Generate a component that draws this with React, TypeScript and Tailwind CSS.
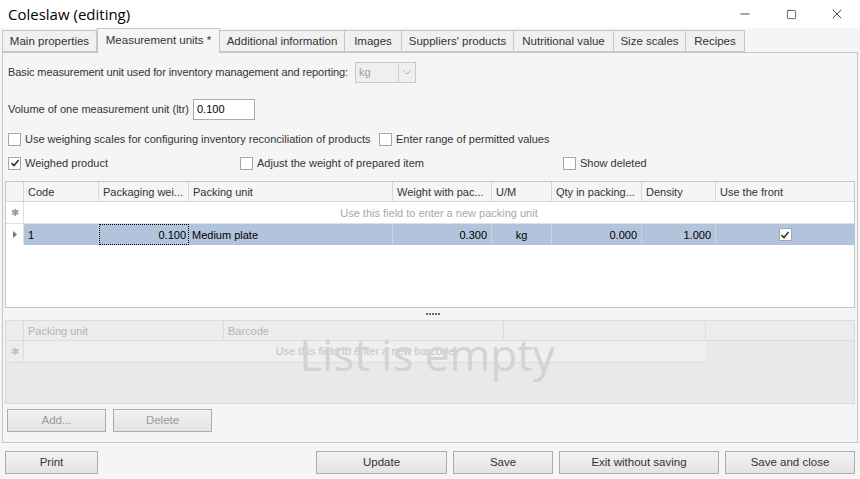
import { Minus, Square, X } from 'lucide-react';

const font = { fontFamily: '"Liberation Sans", Arial, sans-serif' };

function Check({ checked = false }: { checked?: boolean }) {
  return (
    <span className="w-[13px] h-[13px] border border-[#a6a6a6] bg-white flex items-center justify-center shrink-0">
      {checked && (
        <svg width="10" height="10" viewBox="0 0 10 10">
          <path d="M1.5 5.2 L4 7.6 L8.6 2" stroke="#333" strokeWidth="1.6" fill="none" />
        </svg>
      )}
    </span>
  );
}

function Option({ label, checked }: { label: string; checked?: boolean }) {
  return (
    <label className="flex items-center gap-[4px] text-[#333] whitespace-nowrap">
      <Check checked={checked} />
      <span>{label}</span>
    </label>
  );
}

function Btn({ label, w, disabled }: { label: string; w: string; disabled?: boolean }) {
  return (
    <button
      className={`${w} h-[23px] border border-[#acacac] bg-gradient-to-b from-[#f2f2f2] to-[#e3e3e3] text-[11.5px] ${
        disabled ? 'text-[#9a9a9a]' : 'text-[#333]'
      }`}
    >
      {label}
    </button>
  );
}

const tabs = [
  ['Main properties', 'w-[95px]'],
  ['Measurement units *', 'w-[123px]'],
  ['Additional information', 'w-[125px]'],
  ['Images', 'w-[57px]'],
  ["Suppliers' products", 'w-[112px]'],
  ['Nutritional value', 'w-[100px]'],
  ['Size scales', 'w-[72px]'],
  ['Recipes', 'w-[59px]'],
];

const cols = 'grid grid-cols-[18px_75px_90px_204px_99px_60px_90px_74px_1fr]';

export default function App() {
  return (
    <div className="w-[860px] h-[479px] bg-[#f5f5f5] flex flex-col text-[11px] overflow-hidden" style={font}>
      {/* Title bar */}
      <div className="h-[28px] bg-white flex items-center justify-between shrink-0">
        <span className="pl-[8px] text-[15px] text-black" style={{ fontFamily: '"Open Sans", sans-serif' }}>
          Coleslaw (editing)
        </span>
        <div className="flex items-center h-full text-black">
          <span className="w-[46px] flex justify-center"><Minus size={14} strokeWidth={1.2} /></span>
          <span className="w-[46px] flex justify-center"><Square size={11} strokeWidth={1.3} /></span>
          <span className="w-[46px] flex justify-center"><X size={16} strokeWidth={1.1} /></span>
        </div>
      </div>

      {/* Tabs */}
      <div className="flex items-end h-[24px] pl-[2px] shrink-0 relative z-10 text-[11.5px]">
        {tabs.map(([t, w], i) =>
          i === 1 ? (
            <div key={t} className={`${w} h-[25px] -mb-[1px] border border-b-0 border-[#c6c6c6] bg-[#f5f5f5] flex items-center justify-center text-[#333] whitespace-nowrap`}>
              {t}
            </div>
          ) : (
            <div key={t} className={`${w} h-[22px] border border-l-0 first:border-l border-[#c6c6c6] bg-[#f0f0f0] flex items-center justify-center text-[#333] whitespace-nowrap pt-[1px]`}>
              {t}
            </div>
          )
        )}
      </div>

      {/* Panel */}
      <div className="mx-[2px] h-[391px] border border-[#c6c6c6] bg-[#f5f5f5] flex flex-col px-[2px] shrink-0">
        <div className="flex items-center h-[20px] mt-[9px] pl-[3px] text-[#333]">
          <span className="tracking-[-0.1px]">Basic measurement unit used for inventory management and reporting:</span>
          <div className="ml-[7px] w-[61px] h-[21px] border border-[#c9c9c9] bg-[#efefef] flex items-center text-[#a0a0a0]">
            <span className="flex-1 pl-[3px]">kg</span>
            <span className="w-[17px] h-full border-l border-[#d0d0d0] flex items-center justify-center">
              <svg width="8" height="5" viewBox="0 0 8 5"><path d="M0.5 0.5 L4 4 L7.5 0.5" stroke="#b0b0b0" fill="none" /></svg>
            </span>
          </div>
        </div>

        <div className="flex items-center h-[21px] mt-[17px] pl-[3px] text-[#333]">
          <span>Volume of one measurement unit (ltr)</span>
          <div className="ml-[4px] w-[62px] h-[21px] border border-[#acacac] bg-white flex items-center pl-[3px] text-black">0.100</div>
        </div>

        <div className="flex items-center h-[16px] mt-[11px] pl-[3px]">
          <div className="w-[371px]"><Option label="Use weighing scales for configuring inventory reconciliation of products" /></div>
          <Option label="Enter range of permitted values" />
        </div>

        <div className="flex items-center h-[16px] mt-[8px] pl-[3px]">
          <div className="w-[232px]"><Option label="Weighed product" checked /></div>
          <div className="w-[323px]"><Option label="Adjust the weight of prepared item" /></div>
          <Option label="Show deleted" />
        </div>

        {/* Grid 1 */}
        <div className="mt-[10px] h-[127px] border border-[#c6c6c6] bg-white flex flex-col shrink-0">
          <div className={`${cols} h-[20px] bg-[#f5f5f5] border-b border-[#d6d6d6] text-[#333]`}>
            {['', 'Code', 'Packaging wei...', 'Packing unit', 'Weight with pac...', 'U/M', 'Qty in packing...', 'Density', 'Use the front'].map((h, i) => (
              <div key={i} className="border-r border-[#d6d6d6] last:border-r-0 flex items-center pl-[4px] pt-[2px] whitespace-nowrap overflow-hidden">
                {h}
              </div>
            ))}
          </div>
          <div className={`${cols} h-[22px] border-b border-[#e0e0e0]`}>
            <div className="border-r border-[#e0e0e0] flex items-center justify-center text-[#999] text-[10px]">✱</div>
            <div className="col-span-8 flex items-center justify-center text-[#a8a8a8] pt-[1px]">Use this field to enter a new packing unit</div>
          </div>
          <div className={`${cols} h-[21px] bg-[#b1c4dc] text-black`}>
            <div className="bg-white border-r border-[#e0e0e0] flex items-center justify-center">
              <svg width="4" height="7" viewBox="0 0 4 7"><path d="M0 0 L4 3.5 L0 7Z" fill="#777" /></svg>
            </div>
            <div className="flex items-center pl-[4px] pt-[1px] border-r border-[#c5d3e5]">1</div>
            <div className="flex items-center justify-end pr-[2px] pt-[1px] border border-dotted border-black">0.100</div>
            <div className="flex items-center pl-[3px] pt-[1px] border-r border-[#c5d3e5]">Medium plate</div>
            <div className="flex items-center justify-end pr-[4px] pt-[1px] border-r border-[#c5d3e5]">0.300</div>
            <div className="flex items-center justify-center pt-[1px] border-r border-[#c5d3e5]">kg</div>
            <div className="flex items-center justify-end pr-[4px] pt-[1px] border-r border-[#c5d3e5]">0.000</div>
            <div className="flex items-center justify-end pr-[4px] pt-[1px] border-r border-[#c5d3e5]">1.000</div>
            <div className="flex items-center justify-center"><Check checked /></div>
          </div>
        </div>

        {/* Splitter */}
        <div className="h-[12px] flex items-center justify-center shrink-0">
          <div className="flex gap-[1px] ml-[6px]">
            {[0, 1, 2, 3, 4].map((d) => (
              <span key={d} className="w-[2px] h-[2px] bg-[#666]" />
            ))}
          </div>
        </div>

        {/* Grid 2 (disabled) */}
        <div className="h-[84px] border border-[#dadada] bg-[#e9e9e9] flex flex-col relative shrink-0">
          <div className="grid grid-cols-[18px_200px_280px_202px_1fr] h-[20px] border-b border-[#dcdcdc] bg-[#ececec] text-[#b5b5b5]">
            {['', 'Packing unit', 'Barcode', '', ''].map((h, i) => (
              <div key={i} className="border-r border-[#dcdcdc] last:border-r-0 flex items-center pl-[4px] pt-[2px]">{h}</div>
            ))}
          </div>
          <div className="grid grid-cols-[18px_682px_1fr] h-[22px]">
            <div className="border-r border-b border-[#dcdcdc] bg-[#ececec] flex items-center justify-center text-[#c0c0c0] text-[10px]">✱</div>
            <div className="border-b border-[#dcdcdc] bg-[#efefef] flex items-center justify-center text-[#c4c4c4]">Use this field to enter a new barcode</div>
            <div />
          </div>
          <div className="absolute inset-0 flex items-center justify-center pb-[16px] pr-[6px] pointer-events-none">
            <span className="text-[44px] text-[#d3d3d3] leading-none" style={{ fontFamily: '"Open Sans", sans-serif' }}>List is empty</span>
          </div>
        </div>

        <div className="flex gap-[7px] mt-[5px] ml-[2px]">
          <Btn label="Add..." w="w-[99px]" disabled />
          <Btn label="Delete" w="w-[99px]" disabled />
        </div>
      </div>

      {/* Footer */}
      <div className="flex items-center mt-[8px] px-[5px]">
        <Btn label="Print" w="w-[93px]" />
        <div className="flex-1" />
        <div className="flex gap-[6px]">
          <Btn label="Update" w="w-[131px]" />
          <Btn label="Save" w="w-[100px]" />
          <Btn label="Exit without saving" w="w-[160px]" />
          <Btn label="Save and close" w="w-[130px]" />
        </div>
      </div>
    </div>
  );
}
